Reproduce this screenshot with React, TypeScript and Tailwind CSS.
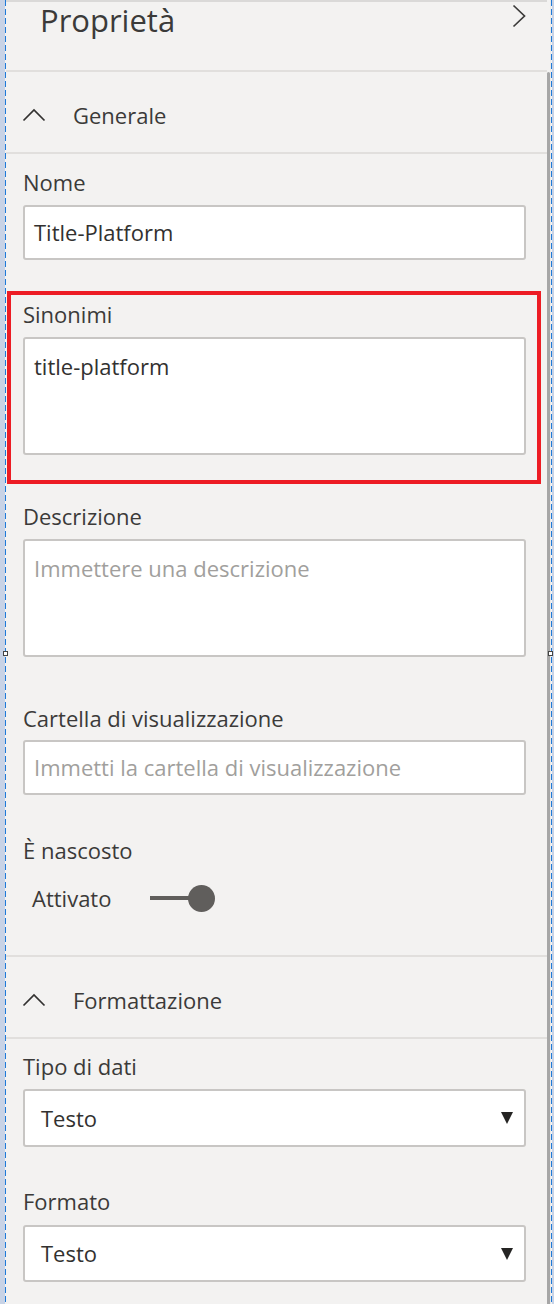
import React from "react";

const font = { fontFamily: '"Open Sans", "Noto Sans", sans-serif' };

function ChevronUp() {
  return (
    <svg width="24" height="14" viewBox="0 0 24 14" className="shrink-0">
      <path d="M1.5 12.5 L12 2 L22.5 12.5" fill="none" stroke="#323130" strokeWidth="1.7" />
    </svg>
  );
}

function Caret() {
  return (
    <svg width="12" height="14" viewBox="0 0 12 14" className="shrink-0">
      <polygon points="0,1 12,1 6,13" fill="#252423" />
    </svg>
  );
}

function Label({ children }: { children: React.ReactNode }) {
  return <div className="text-[22px] leading-[28px] text-[#3b3a39]">{children}</div>;
}

function Separator() {
  return <div className="h-[2px] bg-[#e1dfdd] shrink-0" />;
}

function SectionHeader({ title }: { title: string }) {
  return (
    <div className="h-[80px] flex items-center pt-[6px] pl-[16px] shrink-0">
      <ChevronUp />
      <span className="ml-[27px] text-[22px] leading-[28px] text-[#3b3a39]">{title}</span>
    </div>
  );
}

export default function App() {
  return (
    <div className="relative flex w-[554px] h-[1304px] overflow-hidden bg-[#f3f2f1]" style={font}>
      {/* left selection strip */}
      <div className="w-[5px] bg-[#c8d3e6] shrink-0" />
      <div className="w-[1px] shrink-0 bg-[repeating-linear-gradient(to_bottom,#1f7ad8_0px,#1f7ad8_6px,transparent_6px,transparent_9px)]" />

      {/* panel */}
      <div className="w-[541px] shrink-0 flex flex-col border-t-2 border-[#dad9d8]">
        <div className="h-[68px] shrink-0 flex items-start justify-between pl-[34px] pr-[21px]">
          <div className="text-[31px] leading-[36px] text-[#3b3a39]">Proprietà</div>
          <svg width="14" height="24" viewBox="0 0 14 24" className="mt-[2px]">
            <path d="M1.5 1.5 L12.5 12 L1.5 22.5" fill="none" stroke="#3b3a39" strokeWidth="1.7" />
          </svg>
        </div>
        <Separator />
        <SectionHeader title="Generale" />
        <Separator />

        <div className="pl-[17px] pr-[21px] flex flex-col">
          <div className="mt-[14px]">
            <Label>Nome</Label>
            <div className="mt-[9px] h-[55px] bg-white border-2 border-[#c8c6c4] rounded-[3px] px-[9px] flex items-center text-[22px] text-[#323130]">
              Title-Platform
            </div>
          </div>

          <div className="mt-[31px] -ml-[16px] -mr-[15px] border-4 border-[#ed1c24] pl-[12px] pr-[11px] pt-[5px] pb-[25px]">
            <Label>Sinonimi</Label>
            <div className="mt-[9px] h-[118px] bg-white border-2 border-[#c8c6c4] rounded-[3px] px-[9px] pt-[13px] text-[22px] leading-[28px] text-[#323130]">
              title-platform
            </div>
          </div>

          <div className="mt-[18px]">
            <Label>Descrizione</Label>
            <div className="mt-[9px] h-[118px] bg-white border-2 border-[#c8c6c4] rounded-[3px] px-[9px] pt-[13px] text-[22px] leading-[28px] text-[#a19f9d]">
              Immettere una descrizione
            </div>
          </div>

          <div className="mt-[47px]">
            <Label>Cartella di visualizzazione</Label>
            <div className="mt-[8px] h-[55px] bg-white border-2 border-[#c8c6c4] rounded-[3px] px-[9px] flex items-center text-[22px] text-[#a19f9d]">
              Immetti la cartella di visualizzazione
            </div>
          </div>

          <div className="mt-[41px]">
            <Label>È nascosto</Label>
          </div>
          <div className="mt-[16px] h-[36px] flex items-center pl-[9px]">
            <span className="text-[22px] leading-[28px] text-[#3b3a39] w-[118px]">Attivato</span>
            <div className="flex items-center">
              <div className="w-[40px] h-[4px] bg-[#605e5c]" />
              <div className="w-[27px] h-[27px] rounded-full bg-[#605e5c] -ml-[2px]" />
            </div>
          </div>
        </div>

        <div className="mt-[39px]">
          <Separator />
        </div>
        <SectionHeader title="Formattazione" />
        <Separator />

        <div className="pl-[17px] pr-[21px] flex flex-col">
          <div className="mt-[13px]">
            <Label>Tipo di dati</Label>
            <div className="mt-[9px] h-[58px] bg-white border-2 border-[#c8c6c4] rounded-[3px] pl-[16px] pr-[11px] flex items-center justify-between text-[22px] text-[#323130]">
              <span>Testo</span>
              <Caret />
            </div>
          </div>
          <div className="mt-[40px]">
            <Label>Formato</Label>
            <div className="mt-[10px] h-[57px] bg-white border-2 border-[#c8c6c4] rounded-[3px] pl-[16px] pr-[11px] flex items-center justify-between text-[22px] text-[#323130]">
              <span>Testo</span>
              <Caret />
            </div>
          </div>
        </div>
      </div>

      {/* scrollbar + right selection strip */}
      <div className="w-[3px] shrink-0 mt-[72px] bg-[#a6a6a6] rounded-t-[2px]" />
      <div className="w-[1px] shrink-0 bg-[#e8e8e8]" />
      <div className="w-[1px] shrink-0 bg-[repeating-linear-gradient(to_bottom,#1f7ad8_0px,#1f7ad8_6px,transparent_6px,transparent_9px)]" />
      <div className="w-[2px] shrink-0 bg-[#c8d3e6]" />

      {/* selection handles */}
      <div className="absolute left-[3px] top-[651px] w-[5px] h-[5px] bg-white border border-[#444]" />
      <div className="absolute left-[548px] top-[651px] w-[5px] h-[5px] bg-white border border-[#444]" />
    </div>
  );
}
